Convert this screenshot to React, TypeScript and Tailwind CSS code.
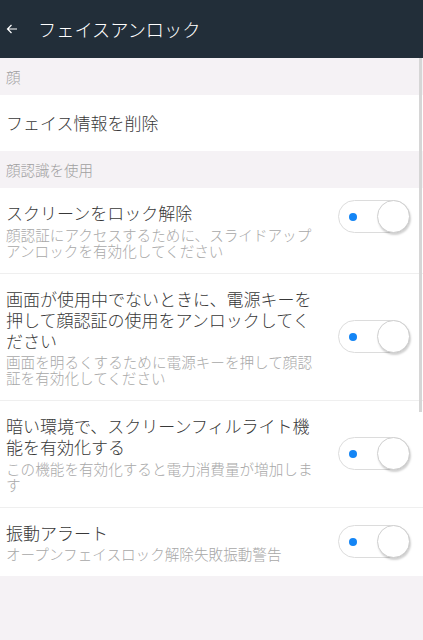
import React from "react";

const font = { fontFamily: '"Noto Sans CJK JP", "Noto Sans", sans-serif' };

function Toggle({ className = "" }: { className?: string }) {
  return (
    <div
      className={`relative w-[72px] h-[33px] shrink-0 rounded-full border border-[#dcdcdc] bg-white ${className}`}
    >
      <div className="absolute left-[10px] top-1/2 -translate-y-1/2 w-[8px] h-[8px] rounded-full bg-[#1485f5]" />
      <div className="absolute right-[-1px] top-[-1px] w-[33px] h-[33px] rounded-full bg-white border border-[#cfcfcf] shadow-[1px_2px_2px_rgba(0,0,0,0.18)]" />
    </div>
  );
}

function Row({
  title,
  sub,
  toggleClass = "self-center",
  last = false,
}: {
  title: string;
  sub: string;
  toggleClass?: string;
  last?: boolean;
}) {
  return (
    <div
      className={`flex bg-white pl-[6px] pr-[13px] pt-[14px] pb-[14px] ${
        last ? "" : "border-b border-[#efefef]"
      }`}
    >
      <div className="w-[316px] flex flex-col">
        <div className="text-[17px] leading-[21px] text-[#383838] font-light">{title}</div>
        <div className="mt-[3.5px] text-[14.6px] leading-[16px] text-[#a8a8a8] font-light">{sub}</div>
      </div>
      <div className="flex-1" />
      <Toggle className={toggleClass} />
    </div>
  );
}

export default function App() {
  return (
    <div className="relative w-[423px] h-[640px] bg-[#f5f2f5] overflow-hidden" style={font}>
      <div className="h-[58px] bg-[#222e39] flex items-center">
        <svg width="12" height="10" viewBox="0 0 12 10" className="ml-[6px]">
          <path d="M11 5H1.5M5.5 1L1.5 5L5.5 9" stroke="#ffffff" strokeWidth="1.2" fill="none" />
        </svg>
        <div className="ml-[20px] text-[18.2px] text-white leading-none font-light">フェイスアンロック</div>
      </div>

      <div className="h-[37px] flex items-center pl-[6px] text-[14.5px] text-[#a0a0a0] font-light">顔</div>
      <div className="h-[56px] bg-white flex items-center pl-[6px] text-[17px] text-[#383838] font-light">
        フェイス情報を削除
      </div>
      <div className="h-[37px] flex items-center pl-[6px] text-[14.5px] text-[#a0a0a0] font-light">顔認識を使用</div>

      <Row
        title="スクリーンをロック解除"
        sub="顔認証にアクセスするために、スライドアップアンロックを有効化してください"
        toggleClass="self-start mt-[-2px]"
      />
      <Row
        title="画面が使用中でないときに、電源キーを押して顔認証の使用をアンロックしてください"
        sub="画面を明るくするために電源キーを押して顔認証を有効化してください"
      />
      <Row
        title="暗い環境で、スクリーンフィルライト機能を有効化する"
        sub="この機能を有効化すると電力消費量が増加します"
      />
      <Row title="振動アラート" sub="オープンフェイスロック解除失敗振動警告" last />

      <div className="absolute right-[1px] top-[58px] w-[3px] h-[354px] bg-[#d6d6d6]" />
    </div>
  );
}
